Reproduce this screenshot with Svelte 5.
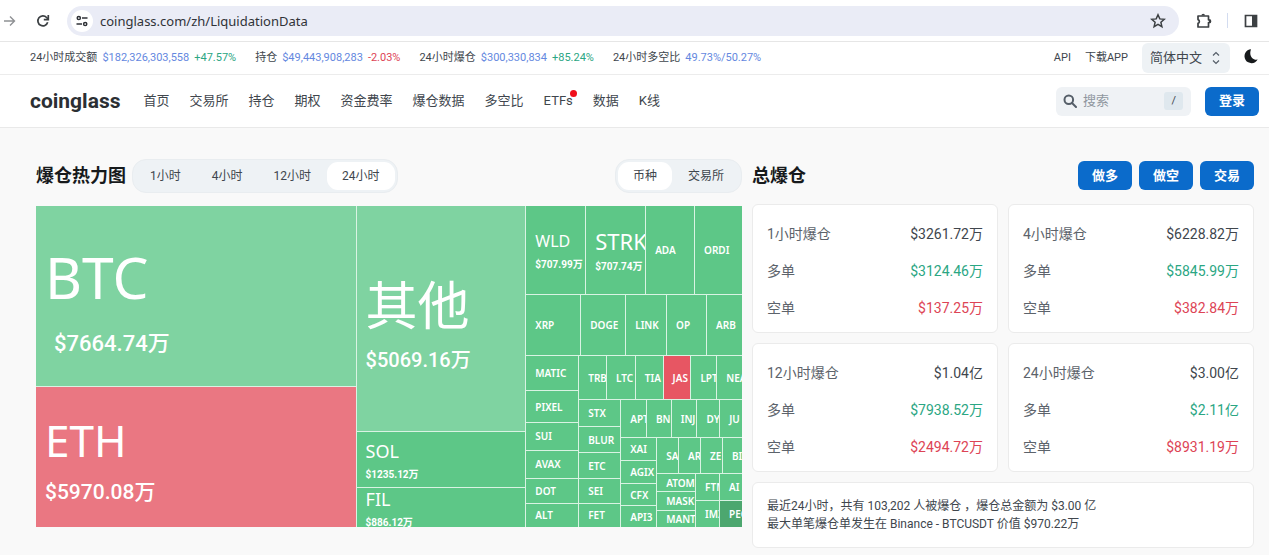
<script lang="ts">
	type Coin = {
		name: string;
		size: number;
		value?: string;
		tone?: string;
		scale?: string;
	};
	type Group = { dir: 'row' | 'column'; size: number; items: Array<Coin | Group> };

	const row = (size: number, items: Array<Coin | Group>): Group => ({ dir: 'row', size, items });
	const col = (size: number, items: Array<Coin | Group>): Group => ({ dir: 'column', size, items });
	const coin = (name: string, size: number, tone = 'up'): Coin => ({ name, size, tone });

	const heatmap = row(1, [
		col(320, [
			{ name: 'BTC', size: 180, value: '$7664.74万', tone: 'up-soft', scale: 'xl' },
			{ name: 'ETH', size: 140, value: '$5970.08万', tone: 'down-soft', scale: 'lg' }
		]),
		col(169, [
			{ name: '其他', size: 226, value: '$5069.16万', tone: 'up-soft', scale: 'other' },
			{ name: 'SOL', size: 55, value: '$1235.12万', tone: 'up', scale: 'md' },
			{ name: 'FIL', size: 39, value: '$886.12万', tone: 'up', scale: 'md' }
		]),
		col(216, [
			row(88, [
				{ name: 'WLD', size: 59, value: '$707.99万', tone: 'up', scale: 'sm' },
				{ name: 'STRK', size: 59, value: '$707.74万', tone: 'up', scale: 'strk' },
				coin('ADA', 48),
				coin('ORDI', 47)
			]),
			row(60, [coin('XRP', 54), coin('DOGE', 44), coin('LINK', 40), coin('OP', 39), coin('ARB', 35)]),
			row(171, [
				col(52, [
					coin('MATIC', 34),
					coin('PIXEL', 31),
					coin('SUI', 26),
					coin('AVAX', 27),
					coin('DOT', 24),
					coin('ALT', 23)
				]),
				col(163, [
					row(43, [
						coin('TRB', 27),
						coin('LTC', 28),
						coin('TIA', 27),
						coin('JAS', 27, 'down'),
						coin('LPT', 25),
						coin('NEA', 25)
					]),
					row(127, [
						col(41, [
							coin('STX', 26),
							coin('BLUR', 25),
							coin('ETC', 24),
							coin('SEI', 24),
							coin('FET', 23)
						]),
						col(121, [
							row(37, [
								coin('APT', 25),
								coin('BN', 24),
								coin('INJ', 25),
								coin('DY', 22),
								coin('JU', 22)
							]),
							row(89, [
								col(35, [coin('XAI', 22), coin('AGIX', 22), coin('CFX', 21), coin('API3', 21)]),
								col(85, [
									row(35, [coin('SA', 21), coin('AR', 21), coin('ZE', 21), coin('BI', 19)]),
									row(53, [
										col(38, [coin('ATOM', 17), coin('MASK', 18), coin('MANT', 16)]),
										col(46, [
											row(26, [coin('FTM', 23), coin('AI', 22)]),
											row(26, [coin('IMX', 23), coin('PEO', 22, 'up-dark')])
										])
									])
								])
							])
						])
					])
				])
			])
		])
	]);

	const stats = [
		{ label: '24小时成交额', value: '$182,326,303,558', change: '+47.57%' },
		{ label: '持仓', value: '$49,443,908,283', change: '-2.03%' },
		{ label: '24小时爆仓', value: '$300,330,834', change: '+85.24%' },
		{ label: '24小时多空比', value: '49.73%/50.27%' }
	];

	const links = ['首页', '交易所', '持仓', '期权', '资金费率', '爆仓数据', '多空比', 'ETFs', '数据', 'K线'];

	const periods = ['1小时', '4小时', '12小时', '24小时'];
	const groupings = ['币种', '交易所'];
	let period = $state('24小时');
	let grouping = $state('币种');
	let query = $state('');

	const totals = [
		{ label: '1小时爆仓', total: '$3261.72万', long: '$3124.46万', short: '$137.25万' },
		{ label: '4小时爆仓', total: '$6228.82万', long: '$5845.99万', short: '$382.84万' },
		{ label: '12小时爆仓', total: '$1.04亿', long: '$7938.52万', short: '$2494.72万' },
		{ label: '24小时爆仓', total: '$3.00亿', long: '$2.11亿', short: '$8931.19万' }
	];
</script>

{#snippet cell(node: Coin | Group)}
	{#if 'items' in node}
		<div class="group {node.dir}" style="flex-grow: {node.size}">
			{#each node.items as child}
				{@render cell(child)}
			{/each}
		</div>
	{:else}
		<div class="coin {node.tone} {node.scale ?? 'xs'}" style="flex-grow: {node.size}">
			<span class="coin-name">{node.name}</span>
			{#if node.value}
				<span class="coin-value">{node.value}</span>
			{/if}
		</div>
	{/if}
{/snippet}

<div class="browser">
	<button class="tool" aria-label="Forward">
		<svg width="12" height="12" viewBox="0 0 12 12" fill="none" stroke="#8f9194" stroke-width="1.4">
			<path d="M0 6h10.5M6 1.5 10.5 6 6 10.5" />
		</svg>
	</button>
	<button class="tool reload" aria-label="Reload">
		<svg width="14" height="14" viewBox="0 0 14 14" fill="none" stroke="#3c4043" stroke-width="1.7">
			<path d="M11.7 8.3A5 5 0 1 1 10.6 3.5L12 5" />
			<path d="M12.3 1v4.6H7.8" />
		</svg>
	</button>
	<div class="omnibox">
		<span class="site-info">
			<svg width="12" height="12" viewBox="0 0 12 12" fill="none" stroke="#2f3237" stroke-width="1.5">
				<circle cx="2.8" cy="3" r="1.6" />
				<path d="M6 3h5.5M.5 9H6" />
				<circle cx="9.2" cy="9" r="1.6" />
			</svg>
		</span>
		<input class="url" aria-label="Address" value="coinglass.com/zh/LiquidationData" />
		<button class="tool" aria-label="Bookmark">
			<svg width="16" height="16" viewBox="0 0 16 16" fill="none" stroke="#3c4043" stroke-width="1.5">
				<path d="m8 1.8 1.8 4.1 4.5.4-3.4 3 1 4.4L8 11.4l-3.9 2.3 1-4.4-3.4-3 4.5-.4z" />
			</svg>
		</button>
	</div>
	<button class="tool" aria-label="Extensions">
		<svg width="18" height="18" viewBox="0 0 18 18" fill="none" stroke="#3c4043" stroke-width="1.7" stroke-linejoin="round">
			<path d="M3 4h10.5v3.8h.6a1.4 1.4 0 0 1 0 2.8h-.6V15H3v-3.6a2 2 0 0 0 0-3.8z" />
			<path d="M6.4 3.6a1.8 1.8 0 0 1 3.6 0zM14 7.4a1.8 1.8 0 0 1 0 3.6z" fill="#3c4043" stroke="none" />
		</svg>
	</button>
	<span class="divider"></span>
	<button class="tool" aria-label="Side panel">
		<svg width="14" height="14" viewBox="0 0 14 14">
			<path d="M1.5 1.5h11v11h-11z" fill="none" stroke="#3c4043" stroke-width="1.7" />
			<path d="M8 1h5v12H8z" fill="#3c4043" />
		</svg>
	</button>
</div>

<div class="ticker">
	{#each stats as stat}
		<div class="stat">
			<span>{stat.label}</span>
			<a href="#stats">{stat.value}</a>
			{#if stat.change}
				<span class={stat.change.startsWith('-') ? 'loss' : 'gain'}>{stat.change}</span>
			{/if}
		</div>
	{/each}
	<div class="ticker-end">
		<a href="#api">API</a>
		<a href="#app">下载APP</a>
		<div class="language">
			<select aria-label="语言">
				<option>简体中文</option>
			</select>
			<svg width="8" height="14" viewBox="0 0 8 14" fill="none" stroke="#555e68" stroke-width="1.2">
				<path d="M1 4.5 4 1.5l3 3M1 9.5l3 3 3-3" />
			</svg>
		</div>
		<button class="tool" aria-label="Dark mode">
			<svg width="14" height="18" viewBox="0 0 14 18" fill="#171a1c">
				<path d="M7 .2A7 7 0 1 0 13.6 10.6C9.2 11.6 4.4 7 7 .2z" />
			</svg>
		</button>
	</div>
</div>

<header>
	<a class="logo" href="#home">coinglass</a>
	<nav>
		{#each links as link}
			<a href="#nav" class:hot={link === 'ETFs'}>{link}</a>
		{/each}
	</nav>
	<label class="search">
		<svg width="14" height="14" viewBox="0 0 14 14" fill="none" stroke="#555e68" stroke-width="2">
			<circle cx="5.8" cy="5.8" r="4.3" />
			<path d="m9 9 4 4" stroke-linecap="round" />
		</svg>
		<input aria-label="搜索" placeholder="搜索" bind:value={query} />
		<kbd>/</kbd>
	</label>
	<button class="primary">登录</button>
</header>

<main>
	<section class="map">
		<div class="section-head">
			<h2>爆仓热力图</h2>
			<div class="tabs">
				{#each periods as item}
					<button class:active={item === period} onclick={() => (period = item)}>{item}</button>
				{/each}
			</div>
			<div class="tabs end">
				{#each groupings as item}
					<button class:active={item === grouping} onclick={() => (grouping = item)}>{item}</button>
				{/each}
			</div>
		</div>
		<div class="heatmap">
			{@render cell(heatmap)}
		</div>
	</section>

	<section class="totals">
		<div class="section-head">
			<h2>总爆仓</h2>
			<div class="actions">
				<button class="primary">做多</button>
				<button class="primary">做空</button>
				<button class="primary">交易</button>
			</div>
		</div>
		<div class="cards">
			{#each totals as item}
				<dl class="card">
					<div><dt>{item.label}</dt><dd>{item.total}</dd></div>
					<div><dt>多单</dt><dd class="gain">{item.long}</dd></div>
					<div><dt>空单</dt><dd class="loss">{item.short}</dd></div>
				</dl>
			{/each}
			<div class="card summary">
				<p>最近24小时，共有 103,202 人被爆仓 ，爆仓总金额为 $3.00 亿</p>
				<p>最大单笔爆仓单发生在 Binance - BTCUSDT 价值 $970.22万</p>
			</div>
		</div>
	</section>
</main>

<style>
	:global(body) {
		background: #f9f9f9;
		color: #40464d;
		font-family: Roboto, 'Noto Sans CJK SC', sans-serif;
		font-size: 12px;
		line-height: 16px;
	}

	a {
		color: inherit;
		text-decoration: none;
	}

	button,
	input,
	select {
		font: inherit;
		color: inherit;
		border: 0;
		background: none;
		padding: 0;
		margin: 0;
		outline: 0;
	}

	h2,
	p,
	dl,
	dd {
		margin: 0;
	}

	svg {
		display: block;
		flex: none;
	}

	.browser {
		display: flex;
		align-items: center;
		height: 41px;
		padding: 0 11px 0 4px;
		gap: 14px;
		background: #fff;
		border-bottom: 1px solid #e6e6e6;
	}

	.tool {
		display: flex;
		flex: none;
		align-items: center;
		justify-content: center;
	}

	.reload {
		margin: 0 3px 0 6px;
	}

	.omnibox {
		display: flex;
		flex: 1;
		align-items: center;
		gap: 7px;
		height: 30px;
		padding: 0 13px 0 4px;
		margin-right: 2px;
		border-radius: 15px;
		background: #eaecf6;
	}

	.site-info {
		display: grid;
		place-items: center;
		width: 22px;
		height: 22px;
		border-radius: 50%;
		background: #fff;
	}

	.url {
		flex: 1;
		min-width: 0;
		font-family: 'Noto Sans', sans-serif;
		font-size: 13px;
		color: #303338;
	}

	.divider {
		width: 1px;
		height: 15px;
		margin-right: 2px;
		background: #d3dcf0;
	}

	.ticker {
		display: flex;
		align-items: center;
		gap: 19px;
		height: 32px;
		padding: 0 11px 0 30px;
		background: #fff;
		border-bottom: 1px solid #ececec;
		font-size: 11px;
		white-space: nowrap;
	}

	.stat {
		display: flex;
		gap: 5px;
	}

	.stat a {
		color: #6488e0;
	}

	.gain {
		color: #2ba683;
	}

	.loss {
		color: #dd4455;
	}

	.ticker-end {
		display: flex;
		align-items: center;
		gap: 14px;
		margin-left: auto;
	}

	.language {
		position: relative;
		font-size: 13px;
	}

	.language select {
		appearance: none;
		display: block;
		width: 88px;
		height: 30px;
		padding-left: 8px;
		border-radius: 6px;
		background: #eef2f5;
	}

	.language svg {
		position: absolute;
		right: 10px;
		top: 8px;
		pointer-events: none;
	}

	header {
		display: flex;
		align-items: center;
		height: 52px;
		padding: 0 10px 0 30px;
		background: #fff;
		border-bottom: 1px solid #e9e9e9;
		font-size: 13px;
		white-space: nowrap;
	}

	.logo {
		font-size: 21px;
		font-weight: 700;
		line-height: 24px;
		color: #2b2f33;
	}

	nav {
		display: flex;
		gap: 20px;
		margin-left: 23px;
	}

	.hot {
		position: relative;
	}

	.hot::after {
		content: '';
		position: absolute;
		top: -3px;
		right: -4px;
		width: 7px;
		height: 7px;
		border-radius: 50%;
		background: #f0101c;
	}

	.search {
		display: flex;
		align-items: center;
		gap: 6px;
		width: 120px;
		height: 29px;
		margin: 0 14px 0 auto;
		padding: 0 8px 0 7px;
		border-radius: 6px;
		background: #eff2f5;
	}

	.search input {
		flex: 1;
		width: 0;
	}

	.search input::placeholder {
		color: #8f979f;
	}

	kbd {
		padding: 0 7px;
		border-radius: 3px;
		background: #dfe8ee;
		font-family: inherit;
		font-size: 11px;
		line-height: 18px;
	}

	.primary {
		min-width: 54px;
		height: 29px;
		border-radius: 6px;
		background: #0b6bcb;
		color: #fff;
		font-size: 13px;
		font-weight: 700;
	}

	main {
		display: grid;
		grid-template-columns: minmax(0, 706fr) minmax(0, 502fr);
		gap: 10px;
		padding: 31px 15px 8px 36px;
	}

	.section-head {
		display: flex;
		align-items: center;
		height: 33px;
	}

	h2 {
		font-size: 18px;
		font-weight: 700;
		line-height: 26px;
		color: #171a1c;
		white-space: nowrap;
	}

	.tabs {
		display: flex;
		gap: 1px;
		margin-left: 6px;
		padding: 2px;
		border: 1px solid #e9edf0;
		border-radius: 14px;
		background: #eef2f5;
	}

	.tabs.end {
		margin-left: auto;
	}

	.tabs button {
		height: 28px;
		padding: 0 15px;
		border-radius: 11px;
	}

	.tabs .active {
		background: #fff;
	}

	.heatmap {
		display: flex;
		height: 321px;
		margin-top: 14px;
		background: #d9f3e3;
	}

	.group {
		display: flex;
		flex-basis: 0;
		gap: 1px;
		min-width: 0;
		min-height: 0;
	}

	.column {
		flex-direction: column;
	}

	.coin {
		display: flex;
		flex-direction: column;
		flex-basis: 0;
		justify-content: center;
		box-sizing: border-box;
		min-width: 0;
		min-height: 0;
		overflow: hidden;
		color: #fff;
		white-space: nowrap;
	}

	.coin-name,
	.coin-value {
		margin-left: 9px;
	}

	.coin-name {
		font-family: 'Noto Sans', 'Noto Sans CJK SC', sans-serif;
	}

	.up {
		background: #5dc787;
	}

	.up-soft {
		background: #7fd3a1;
	}

	.up-dark {
		background: #4ca76f;
	}

	.down {
		background: #e75663;
	}

	.down-soft {
		background: #ea7782;
	}

	.xs {
		font-size: 10px;
		font-weight: 600;
		line-height: 14px;
	}

	.xl .coin-name {
		margin-top: 6px;
		font-size: 57px;
		line-height: 76px;
	}

	.xl .coin-value {
		margin: 14px 0 0 18px;
		font-size: 22px;
		font-weight: 500;
		line-height: 30px;
	}

	.lg .coin-name {
		margin-top: 4px;
		font-size: 44px;
		line-height: 56px;
	}

	.lg .coin-value {
		margin-top: 10px;
		font-size: 21px;
		font-weight: 500;
		line-height: 28px;
	}

	.other .coin-name {
		margin-top: 14px;
		font-size: 52px;
		line-height: 64px;
	}

	.other .coin-value {
		margin-top: 4px;
		font-size: 20px;
		font-weight: 500;
		line-height: 38px;
	}

	.md .coin-name,
	.sm .coin-name,
	.strk .coin-name {
		margin-top: 4px;
		font-size: 18px;
		line-height: 24px;
	}

	.md .coin-value,
	.sm .coin-value,
	.strk .coin-value {
		margin-top: 2px;
		font-size: 10px;
		font-weight: 700;
		line-height: 20px;
	}

	.sm .coin-name {
		font-size: 16px;
	}

	.strk .coin-name {
		font-size: 22px;
		line-height: 28px;
	}

	.actions {
		display: flex;
		gap: 7px;
		margin-left: auto;
	}

	.cards {
		display: grid;
		grid-template-columns: 1fr 1fr;
		gap: 10px;
		margin-top: 12px;
	}

	.card {
		padding: 11px 14px 5px;
		border: 1px solid #ebebeb;
		border-radius: 6px;
		background: #fff;
		font-size: 14px;
		line-height: 37px;
	}

	.card div {
		display: flex;
		justify-content: space-between;
	}

	dt {
		color: #5c636b;
	}

	.summary {
		grid-column: 1 / -1;
		padding: 14px;
		font-size: 12px;
		line-height: 18px;
	}
</style>
